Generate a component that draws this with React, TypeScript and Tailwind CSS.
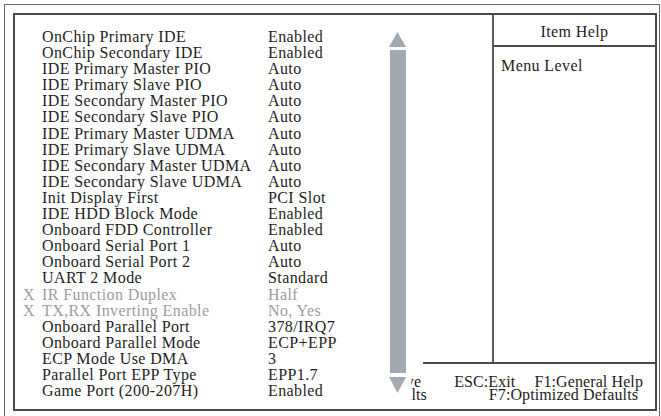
const rows: [string, string, boolean?][] = [
  ['OnChip Primary IDE', 'Enabled'],
  ['OnChip Secondary IDE', 'Enabled'],
  ['IDE Primary Master PIO', 'Auto'],
  ['IDE Primary Slave PIO', 'Auto'],
  ['IDE Secondary Master PIO', 'Auto'],
  ['IDE Secondary Slave PIO', 'Auto'],
  ['IDE Primary Master UDMA', 'Auto'],
  ['IDE Primary Slave UDMA', 'Auto'],
  ['IDE Secondary Master UDMA', 'Auto'],
  ['IDE Secondary Slave UDMA', 'Auto'],
  ['Init Display First', 'PCI Slot'],
  ['IDE HDD Block Mode', 'Enabled'],
  ['Onboard FDD Controller', 'Enabled'],
  ['Onboard Serial Port 1', 'Auto'],
  ['Onboard Serial Port 2', 'Auto'],
  ['UART 2 Mode', 'Standard'],
  ['IR Function Duplex', 'Half', true],
  ['TX,RX Inverting Enable', 'No, Yes', true],
  ['Onboard Parallel Port', '378/IRQ7'],
  ['Onboard Parallel Mode', 'ECP+EPP'],
  ['ECP Mode Use DMA', '3'],
  ['Parallel Port EPP Type', 'EPP1.7'],
  ['Game Port (200-207H)', 'Enabled'],
];

export default function App() {
  return (
    <div
      className="w-[661px] h-[416px] overflow-hidden bg-white pt-[4px] pl-[4px] text-[#1e1e1e]"
      style={{ fontFamily: '"Liberation Serif", "Times New Roman", serif' }}
    >
      {/* outer frame */}
      <div className="w-[656px] h-[440px] border border-[#666] pt-[8px] pl-[8px]">
        {/* inner frame */}
        <div className="flex w-[644px] h-[398px] border-2 border-[#4a4a4a]">
          {/* settings list + scrollbar */}
          <div className="flex w-[396px] shrink-0">
            <div className="min-w-0 flex-1 pt-[14px] text-[16px] leading-[16.1px] tracking-[0.4px]">
              {rows.map(([label, value, off]) => (
                <div key={label} className={`flex whitespace-nowrap ${off ? 'text-[#9c9c9c]' : ''}`}>
                  <span className="w-[27px] shrink-0 pl-[8px]">{off ? 'X' : ''}</span>
                  <span className="w-[226px] shrink-0">{label}</span>
                  <span>{value}</span>
                </div>
              ))}
            </div>
            <div className="flex w-[17px] mr-[5px] flex-col items-center pt-[17px] pb-[16px]">
              <svg width="17" height="15" viewBox="0 0 17 15">
                <polygon points="8.5,0 17,15 0,15" fill="#a3a9b0" />
              </svg>
              <div className="mt-[3px] w-[16px] flex-1 bg-[#a3a9b0]" />
              <svg className="mt-[4px]" width="17" height="16" viewBox="0 0 17 16">
                <polygon points="0,0 17,0 8.5,16" fill="#a3a9b0" />
              </svg>
            </div>
          </div>

          {/* right side: help panel and key legend */}
          <div className="flex min-w-0 flex-1 flex-col">
            <div className="flex flex-1 justify-end">
              <div className="flex w-[163px] flex-col border-l-2 border-[#5a5a5a]">
                <div className="h-[32px] border-b-2 border-[#4a4a4a] pt-[5px] text-center text-[16px] tracking-[0.4px]">
                  Item Help
                </div>
                <div className="pl-[7px] pt-[7px] text-[16px] tracking-[0.4px]">Menu Level</div>
              </div>
            </div>
            <div className="h-[47px] overflow-hidden">
              <div className="ml-[12px] h-[2px] bg-[#4a4a4a]" />
              <div className="pt-[11px] text-[16px] leading-[13px] tracking-[0.1px] whitespace-nowrap">
                <div className="flex justify-end pr-[12px]">
                  <span className="shrink-0">↑↓→←:Move  Enter:Select  +/-/PU/PD:Value  F10:Save</span>
                  <span className="ml-[33px] shrink-0">ESC:Exit</span>
                  <span className="ml-[19px] shrink-0">F1:General Help</span>
                </div>
                <div className="flex justify-end pr-[17px]">
                  <span className="shrink-0">F5:Previous Values  F6:Fail-Safe Defaults</span>
                  <span className="ml-[62px] shrink-0">F7:Optimized Defaults</span>
                </div>
              </div>
            </div>
          </div>
        </div>
      </div>
    </div>
  );
}
